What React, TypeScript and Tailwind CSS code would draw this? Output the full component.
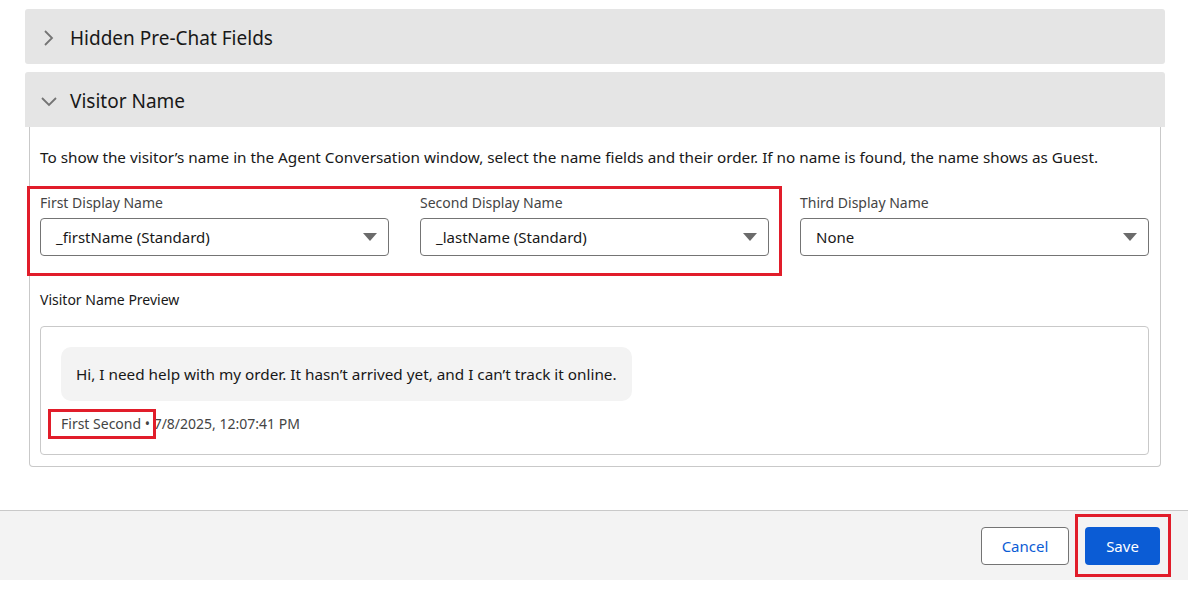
import React from "react";

const font = { fontFamily: '"Noto Sans", "Open Sans", sans-serif' };

function Select({ label, value }: { label: string; value: string }) {
  return (
    <div className="flex flex-col">
      <div className="text-[14px] leading-[20px] text-[#444444] h-[25px]">{label}</div>
      <div className="h-[38px] border border-[#747474] rounded-[4px] bg-white flex items-center justify-between pl-[15px] pr-[11px]">
        <span className="text-[15px] text-[#181818]">{value}</span>
        <svg width="14" height="10" viewBox="0 0 14 10">
          <path d="M0 1 L14 1 L7 9 Z" fill="#6b6b6b" />
        </svg>
      </div>
    </div>
  );
}

export default function App() {
  return (
    <div className="w-[1188px] h-[596px] bg-white flex flex-col relative overflow-hidden" style={font}>
      <div className="pl-[25px] pr-[23px] pt-[9px]">
        <div className="h-[55px] bg-[#e5e5e5] rounded-[3px] flex items-center pl-[18px] pt-[3px] gap-[15px]">
          <svg width="12" height="18" viewBox="0 0 12 18">
            <path d="M2 2 L9 9 L2 16" fill="none" stroke="#747474" strokeWidth="1.8" />
          </svg>
          <span className="text-[19px] text-[#181818]">Hidden Pre-Chat Fields</span>
        </div>
        <div className="mt-[8px] h-[55px] bg-[#e5e5e5] rounded-t-[3px] flex items-center pl-[15px] pt-[3px] gap-[12px]">
          <svg width="18" height="12" viewBox="0 0 18 12">
            <path d="M2 3 L9 10 L16 3" fill="none" stroke="#747474" strokeWidth="1.8" />
          </svg>
          <span className="text-[19px] text-[#181818]">Visitor Name</span>
        </div>
        <div className="mx-[4px] border border-t-0 border-[#c9c9c9] rounded-b-[4px] pl-[10px] pr-[11px] pt-[19px] pb-[11px]">
          <p className="text-[15.3px] leading-[22px] text-[#181818]">
            To show the visitor’s name in the Agent Conversation window, select the name fields and their order. If no name is found, the name shows as Guest.
          </p>
          <div className="relative mt-[25px]">
            <div className="grid grid-cols-3 gap-x-[31px]">
              <Select label="First Display Name" value="_firstName (Standard)" />
              <Select label="Second Display Name" value="_lastName (Standard)" />
              <Select label="Third Display Name" value="None" />
            </div>
            <div className="absolute left-[-13px] top-[-7px] w-[755px] h-[90px] border-[3px] border-[#e11d2a] pointer-events-none" />
          </div>
          <div className="mt-[34px] text-[14px] leading-[20px] text-[#181818]">Visitor Name Preview</div>
          <div className="mt-[16px] border border-[#c9c9c9] rounded-[4px] pl-[20px] pt-[20px] pb-[20px]">
            <div className="inline-flex h-[54px] items-center bg-[#f3f3f3] rounded-[10px] px-[15px]">
              <span className="text-[15.3px] text-[#181818]">
                Hi, I need help with my order. It hasn’t arrived yet, and I can’t track it online.
              </span>
            </div>
            <div className="relative mt-[13px] text-[14px] leading-[20px] text-[#444444]">
              First Second • 7/8/2025, 12:07:41 PM
              <div className="absolute left-[-13px] top-[-5px] w-[108px] h-[30px] border-[3px] border-[#e11d2a] pointer-events-none" />
            </div>
          </div>
        </div>
      </div>
      <div className="absolute left-0 right-0 top-[510px] h-[70px] bg-[#f3f3f3] border-t border-[#c9c9c9] flex items-start justify-end pt-[16px] pr-[28px] gap-[16px]">
        <button className="h-[38px] w-[88px] bg-white border border-[#747474] rounded-[4px] text-[15px] text-[#0b5cd5]">
          Cancel
        </button>
        <div className="relative">
          <button className="h-[38px] w-[75px] bg-[#0b5cd5] rounded-[4px] text-[15px] text-white">Save</button>
          <div className="absolute left-[-10px] top-[-13px] w-[96px] h-[63px] border-[3px] border-[#e11d2a] pointer-events-none" />
        </div>
      </div>
    </div>
  );
}
